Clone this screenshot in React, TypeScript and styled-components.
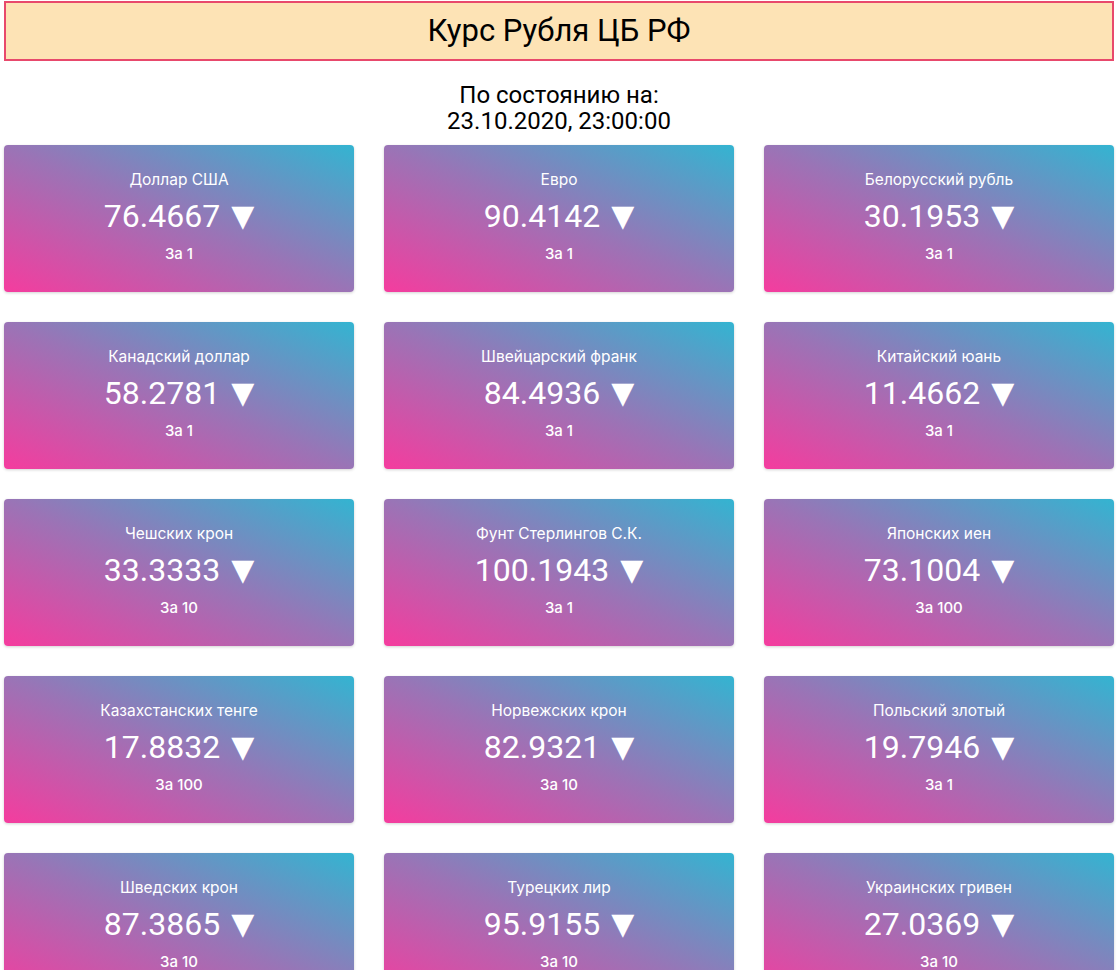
import React from "react";
import styled, { createGlobalStyle } from "styled-components";

const GlobalStyle = createGlobalStyle`
  html, body { margin: 0; padding: 0; background: #fff; }
  body { font-family: Roboto, "Noto Sans", sans-serif; color: #000; }
`;

const Page = styled.div`
  padding: 1px 4px 0;
`;

const Header = styled.header`
  box-sizing: border-box;
  height: 60px;
  border: 2px solid #e8496c;
  background: #fde3b5;
  display: flex;
  align-items: center;
  justify-content: center;
`;

const Title = styled.h1`
  margin: 0;
  font-family: Roboto, sans-serif;
  font-weight: 400;
  font-size: 31px;
  line-height: 36px;
`;

const Updated = styled.div`
  margin: 21px 0 11px;
  text-align: center;
  font-family: Roboto, sans-serif;
  font-size: 24px;
  line-height: 26px;
`;

const Grid = styled.div`
  display: grid;
  grid-template-columns: repeat(3, 350px);
  column-gap: 30px;
  row-gap: 30px;
`;

const Card = styled.div`
  box-sizing: border-box;
  height: 147px;
  border-radius: 4px;
  background: linear-gradient(to top right, #f53c9e 0%, #9a74b6 50%, #33b4d1 100%);
  box-shadow: 0 1px 3px rgba(0, 0, 0, 0.18);
  color: #fff;
  display: flex;
  flex-direction: column;
  align-items: center;
  padding-top: 25px;
`;

const Name = styled.div`
  font-family: Inter, Roboto, sans-serif;
  font-size: 15.5px;
  line-height: 20px;
  font-weight: 400;
`;

const Value = styled.div`
  margin-top: 6px;
  font-family: Roboto, sans-serif;
  font-size: 32px;
  line-height: 40px;
  font-weight: 400;
  display: flex;
  align-items: center;
  gap: 11px;
`;

const Arrow = styled.span`
  font-family: "DejaVu Sans", sans-serif;
  font-size: 30px;
  line-height: 40px;
`;

const Nominal = styled.div`
  margin-top: 8px;
  font-family: Inter, Roboto, sans-serif;
  font-size: 15px;
  line-height: 20px;
  font-weight: 500;
`;

const rates = [
  { name: "Доллар США", value: "76.4667", nominal: 1 },
  { name: "Евро", value: "90.4142", nominal: 1 },
  { name: "Белорусский рубль", value: "30.1953", nominal: 1 },
  { name: "Канадский доллар", value: "58.2781", nominal: 1 },
  { name: "Швейцарский франк", value: "84.4936", nominal: 1 },
  { name: "Китайский юань", value: "11.4662", nominal: 1 },
  { name: "Чешских крон", value: "33.3333", nominal: 10 },
  { name: "Фунт Стерлингов С.К.", value: "100.1943", nominal: 1 },
  { name: "Японских иен", value: "73.1004", nominal: 100 },
  { name: "Казахстанских тенге", value: "17.8832", nominal: 100 },
  { name: "Норвежских крон", value: "82.9321", nominal: 10 },
  { name: "Польский злотый", value: "19.7946", nominal: 1 },
  { name: "Шведских крон", value: "87.3865", nominal: 10 },
  { name: "Турецких лир", value: "95.9155", nominal: 10 },
  { name: "Украинских гривен", value: "27.0369", nominal: 10 },
];

export default function App() {
  return (
    <Page>
      <GlobalStyle />
      <Header>
        <Title>Курс Рубля ЦБ РФ</Title>
      </Header>
      <Updated>
        По состоянию на:
        <br />
        23.10.2020, 23:00:00
      </Updated>
      <Grid>
        {rates.map((r) => (
          <Card key={r.name}>
            <Name>{r.name}</Name>
            <Value>
              {r.value}
              <Arrow>▼</Arrow>
            </Value>
            <Nominal>За {r.nominal}</Nominal>
          </Card>
        ))}
      </Grid>
    </Page>
  );
}
